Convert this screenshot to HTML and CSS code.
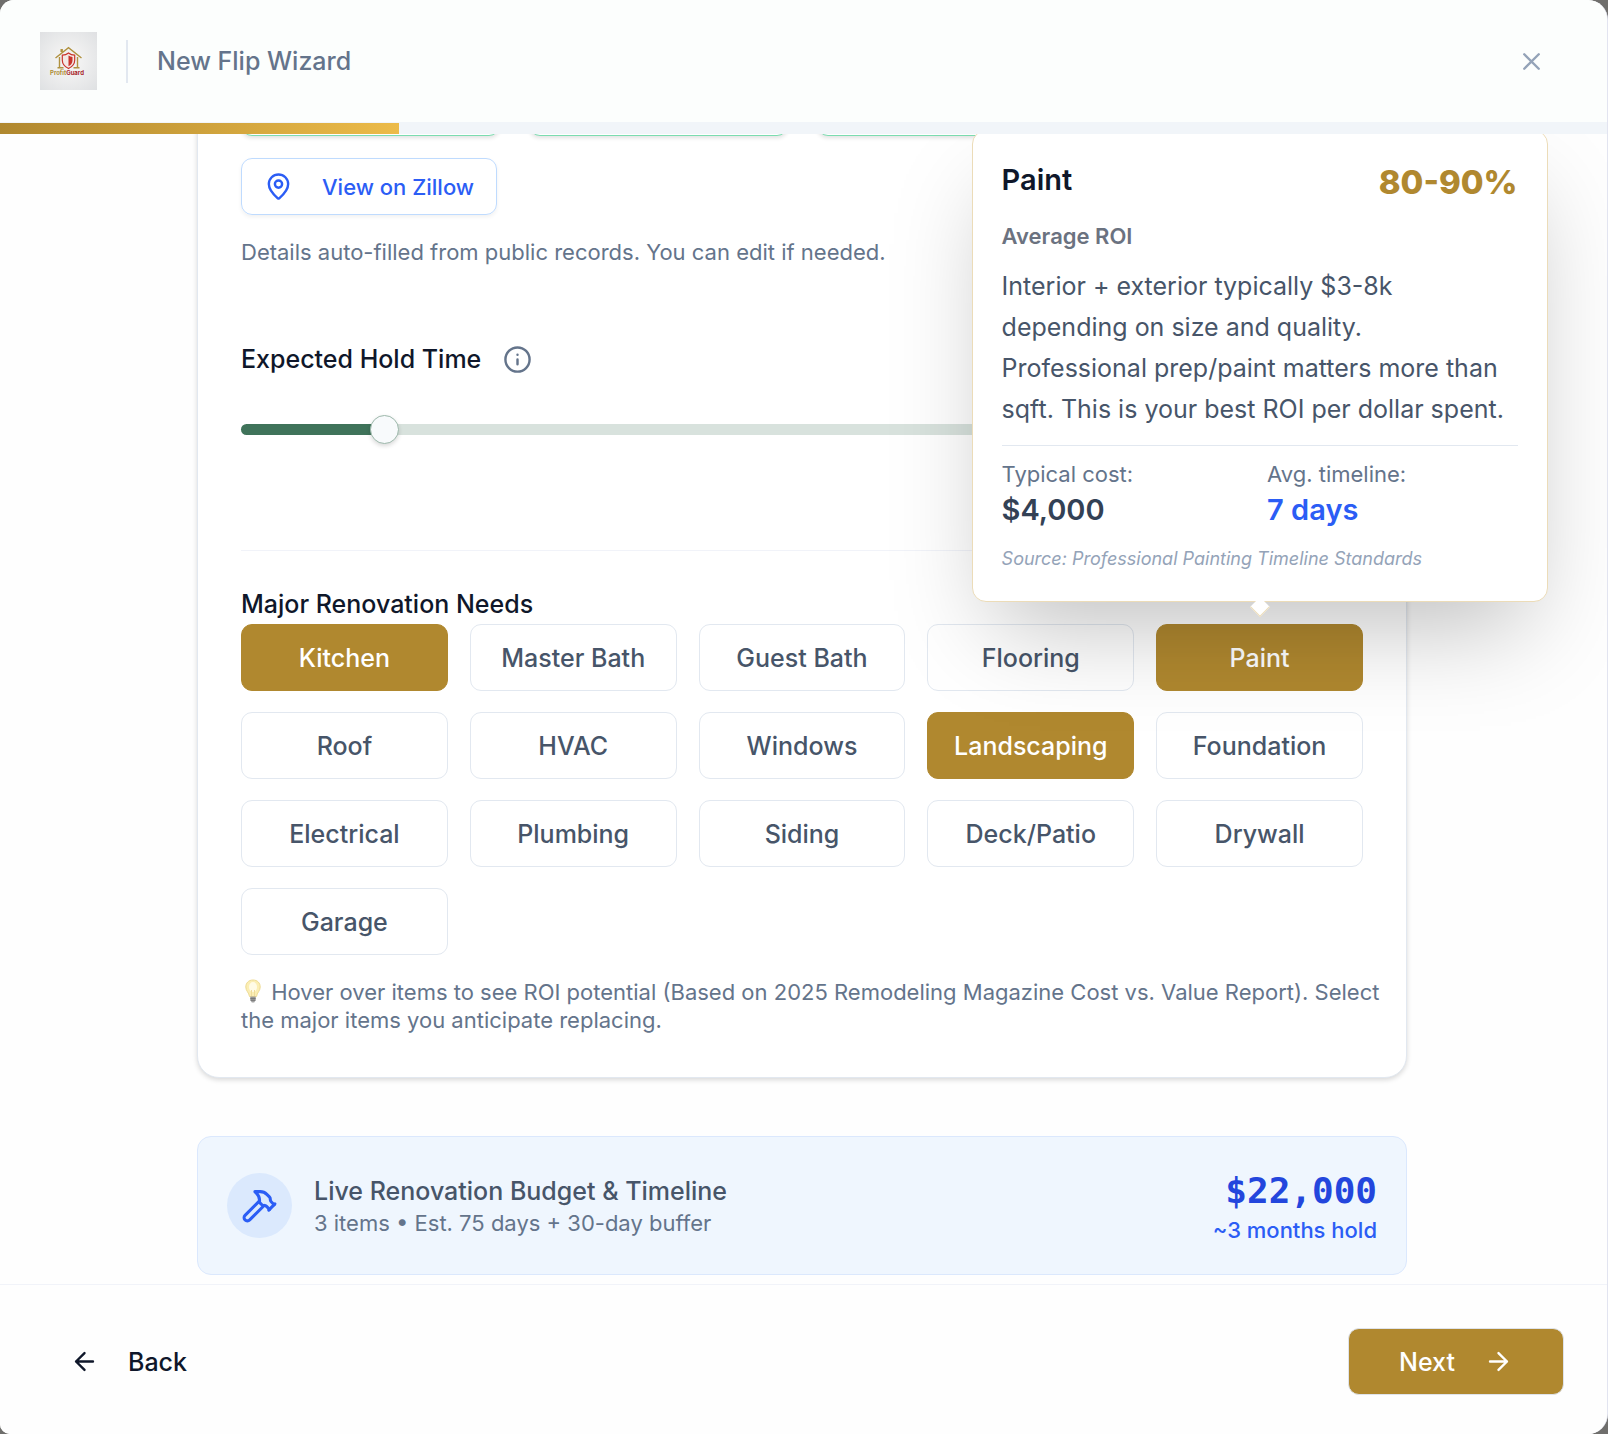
FILE: index.html
```html
<!DOCTYPE html>
<html lang="en">
<head>
  <meta charset="UTF-8" />
  <meta name="viewport" content="width=device-width, initial-scale=1.0"/>
  <title>New Flip Wizard</title>
  <link rel="stylesheet" href="styles.css">
</head>
<body>
  <div class="modal">
    <header class="header">
      <svg class="logo" viewBox="0 0 57 58" role="img" aria-label="ProfitGuard">
        <defs>
          <radialGradient id="logo-bg" r="0.75">
            <stop offset="0.3" stop-color="#f1f1f1"/>
            <stop offset="1" stop-color="#dddfe1"/>
          </radialGradient>
        </defs>
        <rect width="57" height="58" fill="url(#logo-bg)"/>
        <g fill="none" stroke="#b0913f" stroke-width="1.4">
          <path d="M15.5 26 28.5 15.7 41.5 26"/>
          <path d="M19.5 25v10.5M37.5 25v10.5M17.5 35.7h6M33.5 35.7h6"/>
          <path d="M21.700 20v-3" stroke-width="2.400"/>
        </g>
        <path d="M28.500 21c2 1.600 4 2.100 6.200 2.200v5c0 4-2.700 6.500-6.200 8.300-3.500-1.800-6.200-4.300-6.200-8.300v-5c2.200-.1 4.200-.6 6.200-2.200z" fill="#f3e9e6" stroke="#c9352c" stroke-width="1.200"/>
        <path d="M28.500 23.500c1.300.9 2.600 1.300 4 1.400v3.500c0 2.700-1.500 4.400-4 5.900z" fill="#c9352c"/>
        <text x="10" y="43" class="logo-text"><tspan fill="#ad8c35">Profit</tspan><tspan fill="#a8262b">Guard</tspan></text>
      </svg>
      <span class="divider"></span>
      <h1 class="title">New Flip Wizard</h1>
      <button class="close" aria-label="Close">
        <svg class="icon" viewBox="0 0 24 24"><path d="M18 6 6 18M6 6l12 12"/></svg>
      </button>
    </header>
    <div class="progress"><div class="progress-fill" style="width: 24.8%"></div></div>

    <main class="content">
      <section class="card">
        <div class="details">
          <input type="text" class="field" aria-label="Bedrooms">
          <input type="text" class="field" aria-label="Bathrooms">
          <input type="text" class="field" aria-label="Square feet">
          <input type="text" class="field" aria-label="Year built">
        </div>
        <a href="#" class="zillow">
          <svg class="icon" viewBox="0 0 24 24"><path d="M20 10c0 4.993-5.539 10.193-7.399 11.799a1 1 0 0 1-1.202 0C9.539 20.193 4 14.993 4 10a8 8 0 0 1 16 0"/><circle cx="12" cy="10" r="3"/></svg>
          View on Zillow
        </a>
        <p class="note">Details auto-filled from public records. You can edit if needed.</p>

        <div class="hold">
          <label for="hold">Expected Hold Time</label>
          <svg class="icon" viewBox="0 0 24 24"><circle cx="12" cy="12" r="10"/><path d="M12 16v-4M12 8h.01"/></svg>
        </div>
        <input type="range" class="slider" id="hold" min="1" max="18" value="3">

        <div class="needs">
          <h2>Major Renovation Needs</h2>
          <div class="items">
            <button class="item selected">Kitchen</button>
            <button class="item">Master Bath</button>
            <button class="item">Guest Bath</button>
            <button class="item">Flooring</button>
            <div class="item-wrap">
              <button class="item selected" aria-describedby="tip">Paint</button>
              <div class="tooltip" id="tip" role="tooltip">
                <div class="tip-head">
                  <h3>Paint</h3>
                  <span class="roi">80-90%</span>
                </div>
                <p class="tip-label">Average ROI</p>
                <p class="tip-text">Interior + exterior typically $3-8k depending on size and quality. Professional prep/paint matters more than sqft. This is your best ROI per dollar spent.</p>
                <dl class="tip-stats">
                  <div>
                    <dt>Typical cost:</dt>
                    <dd>$4,000</dd>
                  </div>
                  <div>
                    <dt>Avg. timeline:</dt>
                    <dd class="blue">7 days</dd>
                  </div>
                </dl>
                <p class="tip-source">Source: Professional Painting Timeline Standards</p>
              </div>
            </div>
            <button class="item">Roof</button>
            <button class="item">HVAC</button>
            <button class="item">Windows</button>
            <button class="item selected">Landscaping</button>
            <button class="item">Foundation</button>
            <button class="item">Electrical</button>
            <button class="item">Plumbing</button>
            <button class="item">Siding</button>
            <button class="item">Deck/Patio</button>
            <button class="item">Drywall</button>
            <button class="item">Garage</button>
          </div>
          <p class="note hint">
            <svg class="bulb" viewBox="0 0 24 24">
              <path d="M12 1C7.500 1 4.800 4.100 4.800 8c0 4 3.200 5.500 3.700 9.500h7c.5-4 3.700-5.500 3.700-9.500 0-3.900-2.700-7-7.200-7z" fill="#fbeeb4" stroke="#eedb93"/>
              <ellipse cx="12" cy="8" rx="4" ry="5" fill="#fffbe6"/>
              <path d="M10.500 17V11M13.500 17V11" stroke="#efdc9c" fill="none"/>
              <path d="M9.300 17.500h5.400v3.500l-1.500 2.500h-2.400L9.300 21z" fill="#a3a3a3"/>
              <path d="M9.300 19.300h5.400M9.500 21.200h5" stroke="#6f6f6f"/>
            </svg>
            Hover over items to see ROI potential (Based on 2025 Remodeling Magazine Cost vs. Value Report). Select the major items you anticipate replacing.
          </p>
        </div>
      </section>

      <section class="budget">
        <span class="budget-icon">
          <svg class="icon" viewBox="0 0 24 24"><path d="m15 12-9.373 9.373a1 1 0 0 1-3.001-3L12 9"/><path d="m18 15 4-4"/><path d="m21.500 11.500-1.914-1.914A2 2 0 0 1 19 8.172v-.344a2 2 0 0 0-.586-1.414l-1.657-1.657A6 6 0 0 0 12.516 3H9l1.243 1.243A6 6 0 0 1 12 8.485V10l2 2h1.172a2 2 0 0 1 1.414.586L18.500 14.500"/></svg>
        </span>
        <div class="budget-info">
          <h2>Live Renovation Budget &amp; Timeline</h2>
          <p>3 items • Est. 75 days + 30-day buffer</p>
        </div>
        <div class="budget-total">
          <strong>$22,000</strong>
          <span>~3 months hold</span>
        </div>
      </section>
    </main>

    <footer class="footer">
      <button class="back">
        <svg class="icon" viewBox="0 0 24 24"><path d="m12 19-7-7 7-7M19 12H5"/></svg>
        Back
      </button>
      <button class="next">
        Next
        <svg class="icon" viewBox="0 0 24 24"><path d="M5 12h14M12 5l7 7-7 7"/></svg>
      </button>
    </footer>
  </div>
</body>
</html>
```

FILE: styles.css
```css
:root {
  --gold: #b0882f;
  --gold-light: #ecbb49;
  --green: #3f735a;
  --ink: #0f172a;
  --slate: #475569;
  --muted: #64748b;
  --line: #e2e8f0;
  --blue: #2b5df5;
  --blue-dark: #2346dd;
}

* {
  box-sizing: border-box;
}

body {
  margin: 0;
  background: #6f6e6c;
  color: var(--ink);
  font-family: Inter, sans-serif;
  font-size: 25px;
  font-weight: 500;
}

h1, h2, h3, p, dl, dd {
  margin: 0;
  font-size: inherit;
  font-weight: inherit;
}

button {
  font: inherit;
  color: inherit;
  background: none;
  border: none;
  padding: 0;
  cursor: pointer;
}

.icon {
  width: 29px;
  height: 29px;
  flex: none;
  fill: none;
  stroke: currentColor;
  stroke-width: 2;
  stroke-linecap: round;
  stroke-linejoin: round;
}

.modal {
  display: flex;
  flex-direction: column;
  height: 100vh;
  overflow: hidden;
  background: #fefefe;
  border-right: 1px solid #e2e4f0;
  border-radius: 14px 20px 20px 10px;
}

/* header */
.header {
  display: flex;
  align-items: center;
  gap: 29px;
  padding: 32px 61px 32px 40px;
  background: #fcfefd;
  border-bottom: 1px solid #f1f5f9;
  color: var(--muted);
}

.logo {
  width: 57px;
  height: 58px;
}

.logo-text {
  font-size: 6px;
  font-weight: 700;
}

.divider {
  width: 2px;
  height: 43px;
  background: var(--line);
}

.title {
  flex: 1;
}

.close {
  display: flex;
  color: #94a3b8;
}

.progress {
  flex: none;
  height: 11px;
  background: #f1f5f9;
}

.progress-fill {
  height: 100%;
  background: linear-gradient(90deg, var(--gold), var(--gold-light));
}

/* scrolled to the end of the step */
.content {
  flex: 1;
  min-height: 0;
  display: flex;
  flex-direction: column;
  justify-content: flex-end;
  align-items: center;
  gap: 58px;
  padding: 0 3px 9px 0;
  overflow: hidden;
}

.card {
  width: 100%;
  max-width: 1210px;
  padding: 43px;
  background: #fff;
  border: 1px solid var(--line);
  border-radius: 22px;
  box-shadow: 0 2px 5px rgba(0, 0, 0, 0.15);
}

.details {
  display: grid;
  grid-template-columns: repeat(4, 1fr);
  gap: 29px;
  margin-bottom: 22px;
}

.field {
  min-width: 0;
  height: 66px;
  padding: 0 22px;
  font: inherit;
  border: 1px solid #7bdcb0;
  border-radius: 11px;
  box-shadow: 0 2px 4px rgba(0, 0, 0, 0.12);
}

.zillow {
  display: inline-flex;
  align-items: center;
  gap: 29px;
  height: 57px;
  padding: 0 22px;
  font-size: 22px;
  color: var(--blue);
  text-decoration: none;
  border: 1px solid #bfdbfe;
  border-radius: 11px;
  box-shadow: 0 2px 4px rgba(0, 0, 0, 0.06);
  vertical-align: top;
}

.note {
  margin-top: 23px;
  font-size: 22px;
  font-weight: 400;
  line-height: 28px;
  color: var(--muted);
}

.hint {
  margin-right: -22px;
}

.bulb {
  width: 24px;
  height: 24px;
  vertical-align: -3px;
}

.hold {
  display: flex;
  align-items: center;
  gap: 22px;
  margin-top: 79px;
  line-height: 29px;
}

.hold .icon {
  color: var(--muted);
}

.slider {
  display: block;
  width: 100%;
  height: 29px;
  margin: 41px 0 106px;
  background: none;
  appearance: none;
}

.slider::-webkit-slider-runnable-track {
  height: 11px;
  border-radius: 6px;
  background: linear-gradient(90deg, var(--green) 12.5%, #d8e2dd 12.5%);
}

.slider::-webkit-slider-thumb {
  appearance: none;
  width: 29px;
  height: 29px;
  margin-top: -9px;
  background: #f8fafc;
  border: 1px solid #9db8ab;
  border-radius: 50%;
  box-shadow: 0 2px 4px rgba(0, 0, 0, 0.15);
}

.needs {
  padding-top: 33px;
  border-top: 1px solid #f1f3f9;
}

.needs h2 {
  line-height: 40px;
}

.items {
  display: grid;
  grid-template-columns: repeat(5, 1fr);
  gap: 21px 22px;
}

.item {
  width: 100%;
  height: 67px;
  background: #fff;
  color: var(--slate);
  border: 1px solid var(--line);
  border-radius: 11px;
}

.item.selected {
  background: var(--gold);
  border-color: var(--gold);
  color: #fff;
}

.item-wrap {
  position: relative;
}

/* tooltip */
.tooltip {
  position: absolute;
  bottom: calc(100% + 22px);
  left: 50%;
  transform: translateX(-50%);
  width: 576px;
  padding: 29px;
  background: #fff;
  border: 1px solid #ecdcb8;
  border-radius: 14px;
  box-shadow: 0 46px 92px -22px rgba(0, 0, 0, 0.25);
}

.tooltip::after {
  content: "";
  position: absolute;
  bottom: -13px;
  left: 50%;
  width: 13px;
  height: 13px;
  margin-left: -7px;
  background: #fff;
  border: solid #ecdcb8;
  border-width: 0 1px 1px 0;
  transform: rotate(45deg);
}

.tip-head {
  display: flex;
  justify-content: space-between;
  margin-bottom: 18px;
}

.tip-head h3 {
  font-size: 29px;
  font-weight: 600;
  line-height: 40px;
}

.roi {
  font-size: 33px;
  font-weight: 800;
  line-height: 44px;
  color: var(--gold);
}

.tip-label {
  margin-bottom: 15px;
  font-size: 22px;
  font-weight: 600;
  line-height: 29px;
  color: #6b7280;
}

.tip-text {
  padding-right: 8px;
  font-weight: 400;
  line-height: 41px;
  color: var(--slate);
}

.tip-stats {
  display: grid;
  grid-template-columns: 1fr 1fr;
  gap: 15px;
  margin: 15px 0;
  padding-top: 14px;
  border-top: 1px solid var(--line);
}

.tip-stats dt {
  font-size: 22px;
  font-weight: 400;
  line-height: 29px;
  color: var(--muted);
}

.tip-stats dd {
  font-size: 29px;
  font-weight: 600;
  line-height: 42px;
  color: #334155;
}

.tip-stats .blue {
  color: var(--blue);
}

.tip-source {
  font-size: 18px;
  font-style: italic;
  font-weight: 400;
  line-height: 26px;
  color: #94a3b8;
}

/* live budget */
.budget {
  display: flex;
  align-items: center;
  gap: 22px;
  width: 100%;
  max-width: 1210px;
  padding: 29px;
  background: #eff6fe;
  border: 1px solid #dbe8fd;
  border-radius: 14px;
}

.budget-icon {
  display: grid;
  place-items: center;
  width: 65px;
  height: 65px;
  border-radius: 50%;
  background: #dbe9fd;
  color: var(--blue);
}

.budget-icon .icon {
  width: 37px;
  height: 37px;
}

.budget-info {
  flex: 1;
}

.budget-info h2 {
  line-height: 36px;
  color: var(--slate);
}

.budget-info p {
  font-size: 22px;
  font-weight: 400;
  line-height: 29px;
  color: var(--muted);
}

.budget-total {
  display: flex;
  flex-direction: column;
  align-items: flex-end;
}

.budget-total strong {
  font-family: "DejaVu Sans Mono", monospace;
  font-size: 36px;
  line-height: 50px;
  color: var(--blue-dark);
}

.budget-total span {
  font-size: 22px;
  line-height: 29px;
  color: var(--blue);
}

/* footer */
.footer {
  display: flex;
  justify-content: space-between;
  align-items: center;
  padding: 43px 43px 39px 70px;
  background: #fefefe;
  border-top: 1px solid #f1f3f9;
}

.back,
.next {
  display: flex;
  align-items: center;
  gap: 29px;
  height: 67px;
}

.next {
  padding: 0 50px;
  background: var(--gold);
  color: #fff;
  border: 1px solid #dfe3ea;
  border-radius: 11px;
}
```
